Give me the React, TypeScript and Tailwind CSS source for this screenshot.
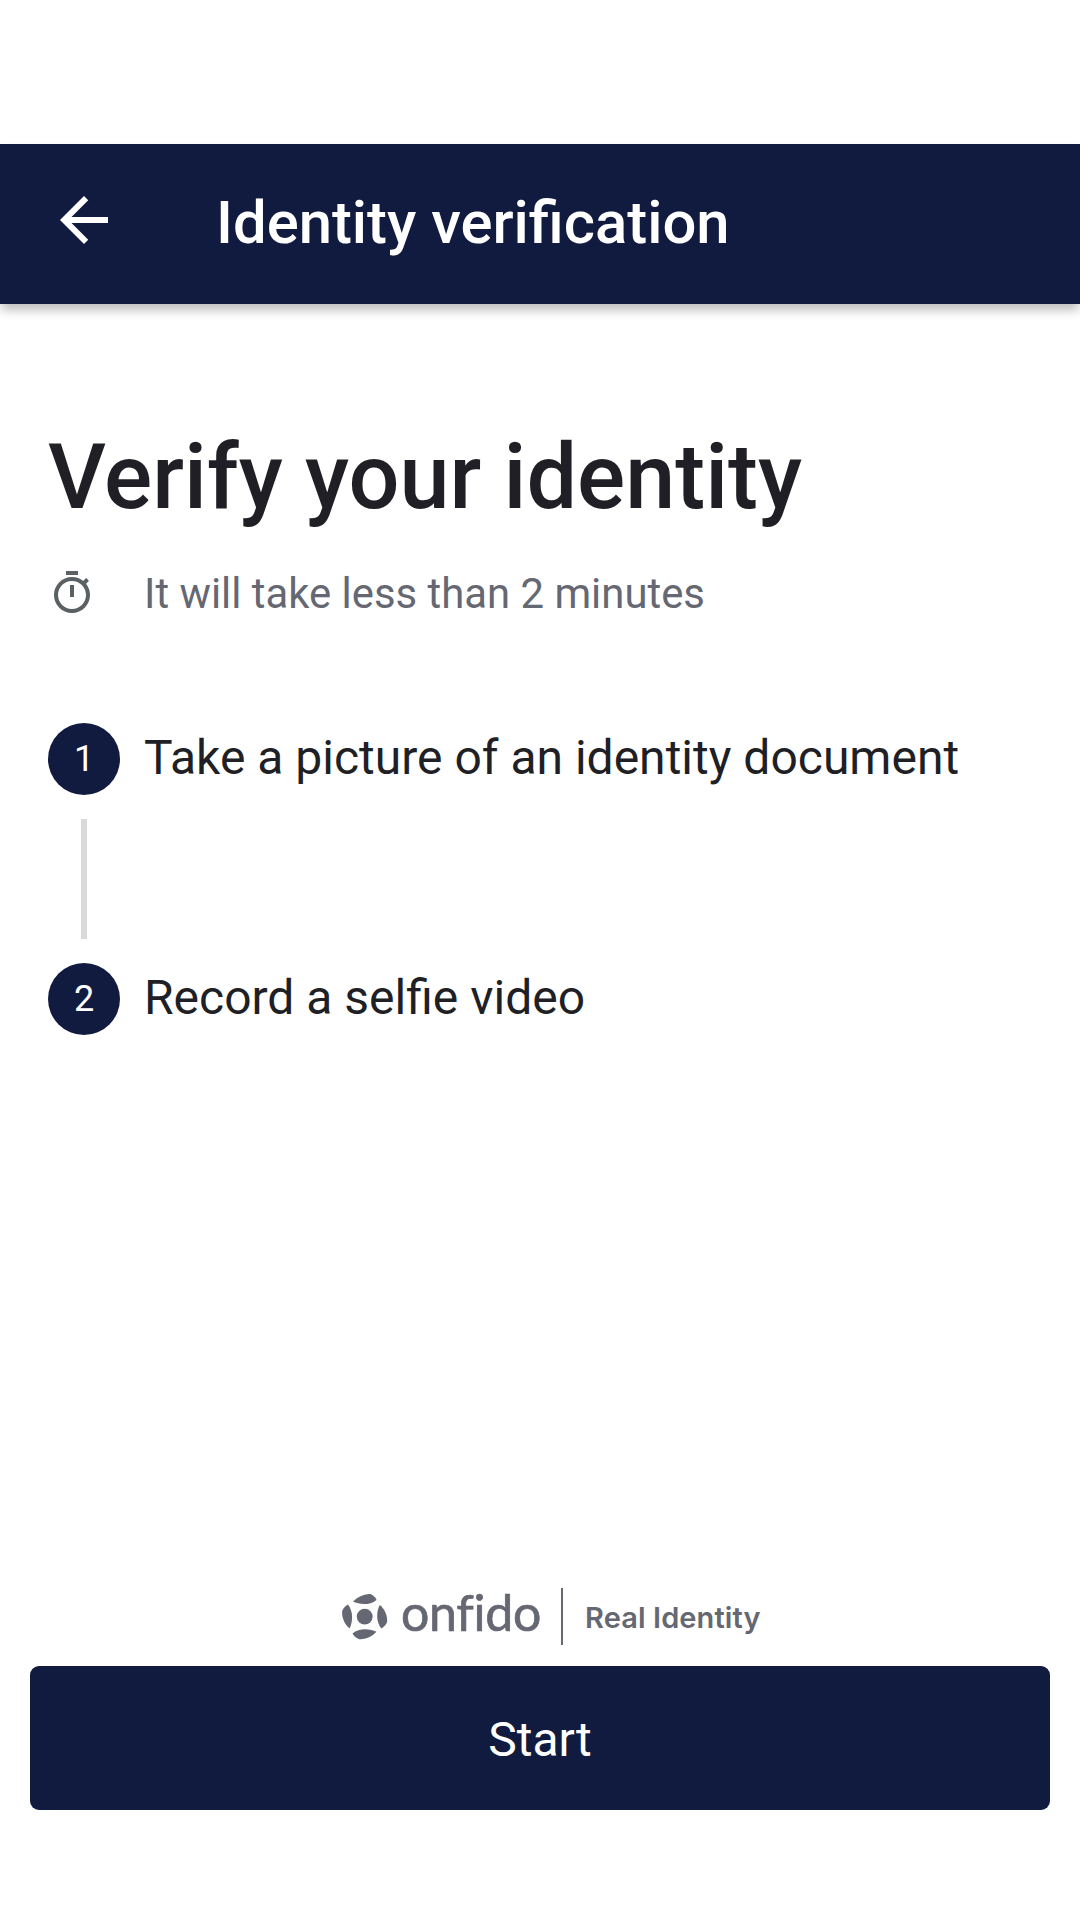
const steps = ["Take a picture of an identity document", "Record a selfie video"];

function OnfidoMark() {
  return (
    <svg width="46" height="46" viewBox="0 0 46 46" fill="#656772" className="shrink-0">
      <circle cx="22.7" cy="22.6" r="7.9" />
      <path d="M11 7.6C15.5 3 21 0.4 27 0.1C30 0 33 2.8 34.6 5.9C30.5 8.9 26.8 10 22 10.1C18 10.1 14 9.2 11 7.6Z" />
      <path d="M37.8 11C42 14.2 45.2 20.5 45.2 26.8C45.2 29.8 42.4 32.8 39.2 34.6C36.6 31 35.2 26.5 35.2 22.2C35.2 18 36 14 37.8 11Z" />
      <path d="M34.4 37.8C30.5 42.2 25 45 18.6 45.2C15.5 45.2 12.2 42.6 10.5 39.4C14 36.8 18.5 35.3 23 35.3C27.5 35.3 31.3 36.2 34.4 37.8Z" />
      <path d="M7.6 34.4C3 30.5 0.1 24.8 0.1 18.4C0.1 15.4 2.8 12.3 6 10.6C8.6 14.2 10.1 18.6 10.1 23C10.1 27.2 9.3 31.2 7.6 34.4Z" />
    </svg>
  );
}

export default function App() {
  return (
    <div className="flex h-[1920px] w-[1080px] flex-col overflow-hidden bg-white pt-36 font-[Roboto,sans-serif]">
      <header className="flex h-40 shrink-0 items-start bg-[#111b40] pl-12 shadow-[0_7px_10px_-1px_rgba(0,0,0,0.26)]">
        <svg width="72" height="72" viewBox="0 0 24 24" fill="white" className="mt-10">
          <path d="M20 11H7.83l5.59-5.59L12 4l-8 8 8 8 1.41-1.41L7.83 13H20v-2z" />
        </svg>
        <div className="mt-[43px] ml-24 text-[59.8px] leading-[72px] font-medium whitespace-nowrap text-white">
          Identity verification
        </div>
      </header>

      <main className="flex grow flex-col px-12 pt-[120px]">
        <h1 className="text-[89.9px] leading-[108px] font-medium whitespace-nowrap text-[#201f25]">
          Verify your identity
        </h1>
        <div className="mt-[37px] flex h-12 items-center gap-12">
          <svg width="48" height="48" viewBox="0 0 24 24" fill="#5b6062">
            <path d="M15 1H9v2h6V1zm-4 13h2V8h-2v6zm8.03-6.61l1.42-1.42c-.43-.51-.9-.99-1.41-1.41l-1.42 1.42C16.07 4.74 14.12 4 12 4c-4.97 0-9 4.03-9 9s4.02 9 9 9 9-4.03 9-9c0-2.12-.74-4.07-1.97-5.61zM12 20c-3.87 0-7-3.13-7-7s3.13-7 7-7 7 3.13 7 7-3.13 7-7 7z" />
          </svg>
          <p className="pt-0.5 text-[41.85px] leading-[50px] whitespace-nowrap text-[#656772]">
            It will take less than 2 minutes
          </p>
        </div>

        <ol className="mt-[106px] flex flex-col">
          {steps.map((step, i) => (
            <li key={step} className="flex flex-col">
              {i > 0 && <div className="my-6 ml-[33px] h-[120px] w-1.5 bg-[#d8dadc]" />}
              <div className="flex items-center gap-6">
                <div className="flex size-[72px] items-center justify-center rounded-full bg-[#111b40] text-[36px] leading-[42px] text-white">
                  {i + 1}
                </div>
                <div className="mb-[3px] text-[48px] leading-[56px] whitespace-nowrap text-[#201f25]">{step}</div>
              </div>
            </li>
          ))}
        </ol>
      </main>

      <footer className="flex h-[332px] shrink-0 flex-col px-[30px]">
        <div className="flex h-[57px] items-center pl-[312px] text-[#656772]">
          <OnfidoMark />
          <div className="mb-2 ml-[13px] w-[143px] font-[Lato,sans-serif] text-[50px] leading-[57px] tracking-[-0.3px] [-webkit-text-stroke:0.7px_#656772] [font-variant-ligatures:none]">
            onfido
          </div>
          <div className="ml-[17px] h-[57px] w-0.5 bg-[#656772]" />
          <div className="mt-0.5 ml-[22px] font-[Inter,sans-serif] text-[29px] leading-[34px] font-semibold tracking-[0.1px] whitespace-nowrap">
            Real Identity
          </div>
        </div>
        <button className="mt-[21px] flex h-36 w-full items-center justify-center rounded-[9px] bg-[#111b40] pt-1 text-[48px] leading-[56px] text-white">
          Start
        </button>
      </footer>
    </div>
  );
}
